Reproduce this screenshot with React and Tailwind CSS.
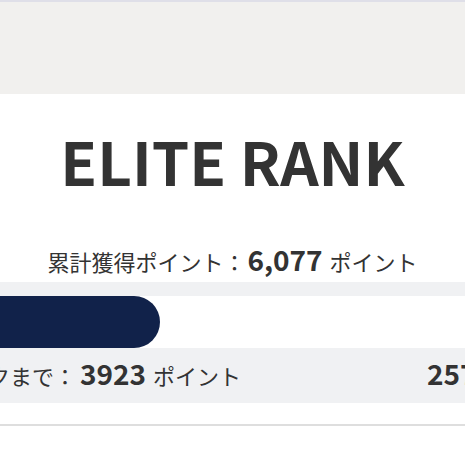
import React from 'react';

const font = { fontFamily: '"Noto Sans CJK JP", "Noto Sans", sans-serif' };

const RankCard = ({ rank, total, toNext, nextTotal, progress }) => (
  <div className="w-[465px] h-[465px] overflow-hidden bg-white text-[#333333]" style={font}>
    <div className="h-[94px] bg-[#f1f0ee] border-t-2 border-[#dfdfe8]" />
    <h1 className="pt-[36px] text-center text-[60px] font-bold leading-none">{rank}</h1>
    <div className="mt-[55px] flex items-baseline justify-center">
      <span className="text-[22px] leading-none">累計獲得ポイント：</span>
      <span className="ml-[2px] text-[28px] font-bold leading-none">{total}</span>
      <span className="ml-[7px] text-[22px] leading-none">ポイント</span>
    </div>
    <div className="mt-[9px] ml-[-120px] mr-[-143px] bg-[#f0f1f3] px-[20px] pt-[14px]">
      <div className="h-[52px] bg-white rounded-full">
        <div className="h-full bg-[#11224a] rounded-full" style={{ width: `${progress}px` }} />
      </div>
      <div className="h-[55px] pt-[11px] flex items-baseline">
        <span className="text-[22px] leading-none">次のランクまで：</span>
        <span className="ml-[4px] text-[28px] font-bold leading-none">{toNext}</span>
        <span className="ml-[7px] text-[22px] leading-none">ポイント</span>
        <span className="ml-auto text-[28px] font-bold leading-none">{nextTotal}</span>
        <span className="ml-[7px] text-[22px] leading-none">ポイント</span>
      </div>
    </div>
    <div className="mt-[21px] h-[2px] bg-[#dedede]" />
  </div>
);

export default function App() {
  return <RankCard rank="ELITE RANK" total="6,077" toNext="3923" nextTotal="2577" progress={260} />;
}
